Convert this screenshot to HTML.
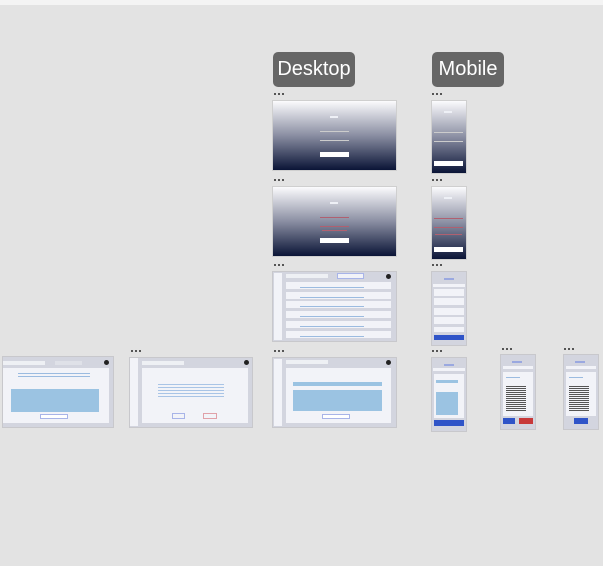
<!DOCTYPE html>
<html><head><meta charset="utf-8"><style>
*{margin:0;padding:0;box-sizing:border-box}
body{width:603px;height:566px;background:#e3e3e3;position:relative;overflow:hidden;font-family:"Liberation Sans",sans-serif}
.a{position:absolute}
.top{left:0;top:0;width:603px;height:5px;background:#f4f4f4}
.lbl{background:#666;color:#fff;font-size:20px;border-radius:5px;text-align:center;line-height:35px;height:35px;top:52px}
.dots{height:2px;width:10px;background:repeating-linear-gradient(90deg,#555 0 2px,transparent 2px 4px)}
.grad{background:linear-gradient(#fbfbfd,#8a8ea2 50%,#0a1436);border:1px solid #cfcfcf}
.btn{background:#fff;height:4px}
.ln{height:1px;background:#ccc}
.rl{height:1px;background:#b06070}
.fr{background:#d3d5df;border:1px solid #c8c8cc}
.pn{background:#f2f3f8}
.card{background:#f2f3f8}
.bl{background:#9bc3e2}
.tx{height:1px;background:#9bbbe0}
.blue{background:#2f54c8}
.red{background:#c83a3a}
.ttl{height:2px;background:#9aa8e0}
.wt{height:2px;background:#eef0f6}
</style></head><body>
<div class="a top"></div>
<div class="a lbl" style="left:273px;width:82px">Desktop</div>
<div class="a lbl" style="left:432px;width:72px">Mobile</div>

<div class="a dots" style="left:274px;top:93px"></div>
<div class="a dots" style="left:432px;top:93px"></div>
<div class="a dots" style="left:274px;top:179px"></div>
<div class="a dots" style="left:432px;top:179px"></div>
<div class="a dots" style="left:274px;top:264px"></div>
<div class="a dots" style="left:432px;top:264px"></div>
<div class="a dots" style="left:274px;top:350px"></div>
<div class="a dots" style="left:432px;top:350px"></div>
<div class="a dots" style="left:131px;top:350px"></div>
<div class="a dots" style="left:502px;top:348px"></div>
<div class="a dots" style="left:564px;top:348px"></div>

<!-- login desktop 1 -->
<div class="a grad" style="left:272px;top:100px;width:125px;height:71px"></div>
<div class="a wt" style="left:330px;top:116px;width:8px"></div>
<div class="a ln" style="left:320px;top:131px;width:29px"></div>
<div class="a ln" style="left:320px;top:140px;width:29px"></div>
<div class="a btn" style="left:320px;top:152px;width:29px;height:5px"></div>
<!-- login mobile 1 -->
<div class="a grad" style="left:431px;top:100px;width:36px;height:74px"></div>
<div class="a wt" style="left:444px;top:111px;width:8px"></div>
<div class="a ln" style="left:434px;top:132px;width:29px"></div>
<div class="a ln" style="left:434px;top:141px;width:29px"></div>
<div class="a btn" style="left:434px;top:161px;width:29px;height:5px"></div>
<!-- login desktop 2 -->
<div class="a grad" style="left:272px;top:186px;width:125px;height:71px"></div>
<div class="a wt" style="left:330px;top:202px;width:8px"></div>
<div class="a rl" style="left:320px;top:217px;width:29px"></div>
<div class="a rl" style="left:320px;top:226px;width:29px"></div>
<div class="a rl" style="left:322px;top:230px;width:25px"></div>
<div class="a btn" style="left:320px;top:238px;width:29px;height:5px"></div>
<!-- login mobile 2 -->
<div class="a grad" style="left:431px;top:186px;width:36px;height:74px"></div>
<div class="a wt" style="left:444px;top:197px;width:8px"></div>
<div class="a rl" style="left:434px;top:218px;width:29px"></div>
<div class="a rl" style="left:434px;top:227px;width:29px"></div>
<div class="a rl" style="left:435px;top:234px;width:27px"></div>
<div class="a btn" style="left:434px;top:247px;width:29px;height:5px"></div>

<!-- desktop list -->
<div class="a fr" style="left:272px;top:271px;width:125px;height:71px"></div>
<div class="a" style="left:274px;top:273px;width:8px;height:67px;background:#f2f3f8"></div>
<div class="a" style="left:286px;top:274px;width:42px;height:4px;background:#eef0f4"></div>
<div class="a" style="left:337px;top:273px;width:27px;height:6px;background:#f2f3f8;border:1px solid #a8b4e8"></div>
<div class="a" style="left:386px;top:274px;width:5px;height:5px;border-radius:50%;background:#222"></div>
<div class="a card" style="left:286px;top:282px;width:105px;height:7px"></div>
<div class="a card" style="left:286px;top:292px;width:105px;height:7px"></div>
<div class="a card" style="left:286px;top:301px;width:105px;height:7px"></div>
<div class="a card" style="left:286px;top:311px;width:105px;height:7px"></div>
<div class="a card" style="left:286px;top:321px;width:105px;height:7px"></div>
<div class="a card" style="left:286px;top:331px;width:105px;height:7px"></div>
<div class="a tx" style="left:300px;top:287px;width:64px"></div>
<div class="a tx" style="left:300px;top:297px;width:64px"></div>
<div class="a tx" style="left:300px;top:306px;width:64px"></div>
<div class="a tx" style="left:300px;top:316px;width:64px"></div>
<div class="a tx" style="left:300px;top:326px;width:64px"></div>
<div class="a tx" style="left:300px;top:336px;width:64px"></div>
<!-- mobile list -->
<div class="a fr" style="left:431px;top:271px;width:36px;height:75px"></div>
<div class="a ttl" style="left:444px;top:278px;width:10px"></div>
<div class="a card" style="left:433px;top:284px;width:32px;height:3px"></div>
<div class="a card" style="left:434px;top:289px;width:30px;height:7px"></div>
<div class="a card" style="left:434px;top:298px;width:30px;height:7px"></div>
<div class="a card" style="left:434px;top:308px;width:30px;height:7px"></div>
<div class="a card" style="left:434px;top:317px;width:30px;height:7px"></div>
<div class="a card" style="left:434px;top:327px;width:30px;height:5px"></div>
<div class="a blue" style="left:434px;top:335px;width:30px;height:5px"></div>

<!-- desktop form -->
<div class="a fr" style="left:272px;top:357px;width:125px;height:71px"></div>
<div class="a" style="left:274px;top:359px;width:8px;height:67px;background:#f2f3f8"></div>
<div class="a" style="left:286px;top:360px;width:42px;height:4px;background:#eef0f4"></div>
<div class="a" style="left:386px;top:360px;width:5px;height:5px;border-radius:50%;background:#222"></div>
<div class="a pn" style="left:286px;top:368px;width:105px;height:55px"></div>
<div class="a bl" style="left:293px;top:382px;width:89px;height:4px"></div>
<div class="a bl" style="left:293px;top:390px;width:89px;height:21px"></div>
<div class="a" style="left:322px;top:414px;width:28px;height:5px;border:1px solid #a8b4e8;background:#fff"></div>
<!-- mobile form -->
<div class="a fr" style="left:431px;top:357px;width:36px;height:75px"></div>
<div class="a ttl" style="left:444px;top:364px;width:10px"></div>
<div class="a card" style="left:433px;top:368px;width:32px;height:3px"></div>
<div class="a pn" style="left:434px;top:374px;width:30px;height:44px"></div>
<div class="a bl" style="left:436px;top:380px;width:22px;height:3px"></div>
<div class="a bl" style="left:436px;top:392px;width:22px;height:23px"></div>
<div class="a blue" style="left:434px;top:420px;width:30px;height:6px"></div>

<!-- mobile blog 1 -->
<div class="a fr" style="left:500px;top:354px;width:36px;height:76px"></div>
<div class="a ttl" style="left:512px;top:361px;width:10px"></div>
<div class="a card" style="left:503px;top:366px;width:30px;height:3px"></div>
<div class="a pn" style="left:503px;top:372px;width:30px;height:44px"></div>
<div class="a tx" style="left:506px;top:377px;width:14px"></div>
<div class="a" style="left:506px;top:386px;width:20px;height:26px;background:repeating-linear-gradient(#555 0 1px,transparent 1px 2px)"></div>
<div class="a blue" style="left:503px;top:418px;width:12px;height:6px"></div>
<div class="a red" style="left:519px;top:418px;width:14px;height:6px"></div>
<!-- mobile blog 2 -->
<div class="a fr" style="left:563px;top:354px;width:36px;height:76px"></div>
<div class="a ttl" style="left:575px;top:361px;width:10px"></div>
<div class="a card" style="left:566px;top:366px;width:30px;height:3px"></div>
<div class="a pn" style="left:566px;top:372px;width:30px;height:44px"></div>
<div class="a tx" style="left:569px;top:377px;width:14px"></div>
<div class="a" style="left:569px;top:386px;width:20px;height:26px;background:repeating-linear-gradient(#555 0 1px,transparent 1px 2px)"></div>
<div class="a blue" style="left:574px;top:418px;width:14px;height:6px"></div>

<!-- left frame -->
<div class="a fr" style="left:2px;top:356px;width:112px;height:72px"></div>
<div class="a" style="left:3px;top:361px;width:42px;height:4px;background:#eef0f4"></div>
<div class="a" style="left:55px;top:361px;width:27px;height:4px;background:#dfe1e8"></div>
<div class="a" style="left:104px;top:360px;width:5px;height:5px;border-radius:50%;background:#222"></div>
<div class="a pn" style="left:3px;top:368px;width:106px;height:55px"></div>
<div class="a tx" style="left:18px;top:373px;width:72px"></div>
<div class="a tx" style="left:18px;top:376px;width:72px"></div>
<div class="a bl" style="left:11px;top:389px;width:88px;height:23px"></div>
<div class="a" style="left:40px;top:414px;width:28px;height:5px;border:1px solid #a8b4e8;background:#fff"></div>
<!-- dialog frame -->
<div class="a fr" style="left:129px;top:357px;width:124px;height:71px"></div>
<div class="a" style="left:130px;top:358px;width:8px;height:68px;background:#f2f3f8"></div>
<div class="a" style="left:142px;top:361px;width:42px;height:4px;background:#eef0f4"></div>
<div class="a" style="left:244px;top:360px;width:5px;height:5px;border-radius:50%;background:#222"></div>
<div class="a pn" style="left:142px;top:368px;width:106px;height:55px"></div>
<div class="a" style="left:158px;top:384px;width:66px;height:14px;background:repeating-linear-gradient(#a9c4e6 0 1px,transparent 1px 3px)"></div>
<div class="a" style="left:172px;top:413px;width:13px;height:6px;border:1px solid #a8b4e8"></div>
<div class="a" style="left:203px;top:413px;width:14px;height:6px;border:1px solid #e0a0a8"></div>
</body></html>
